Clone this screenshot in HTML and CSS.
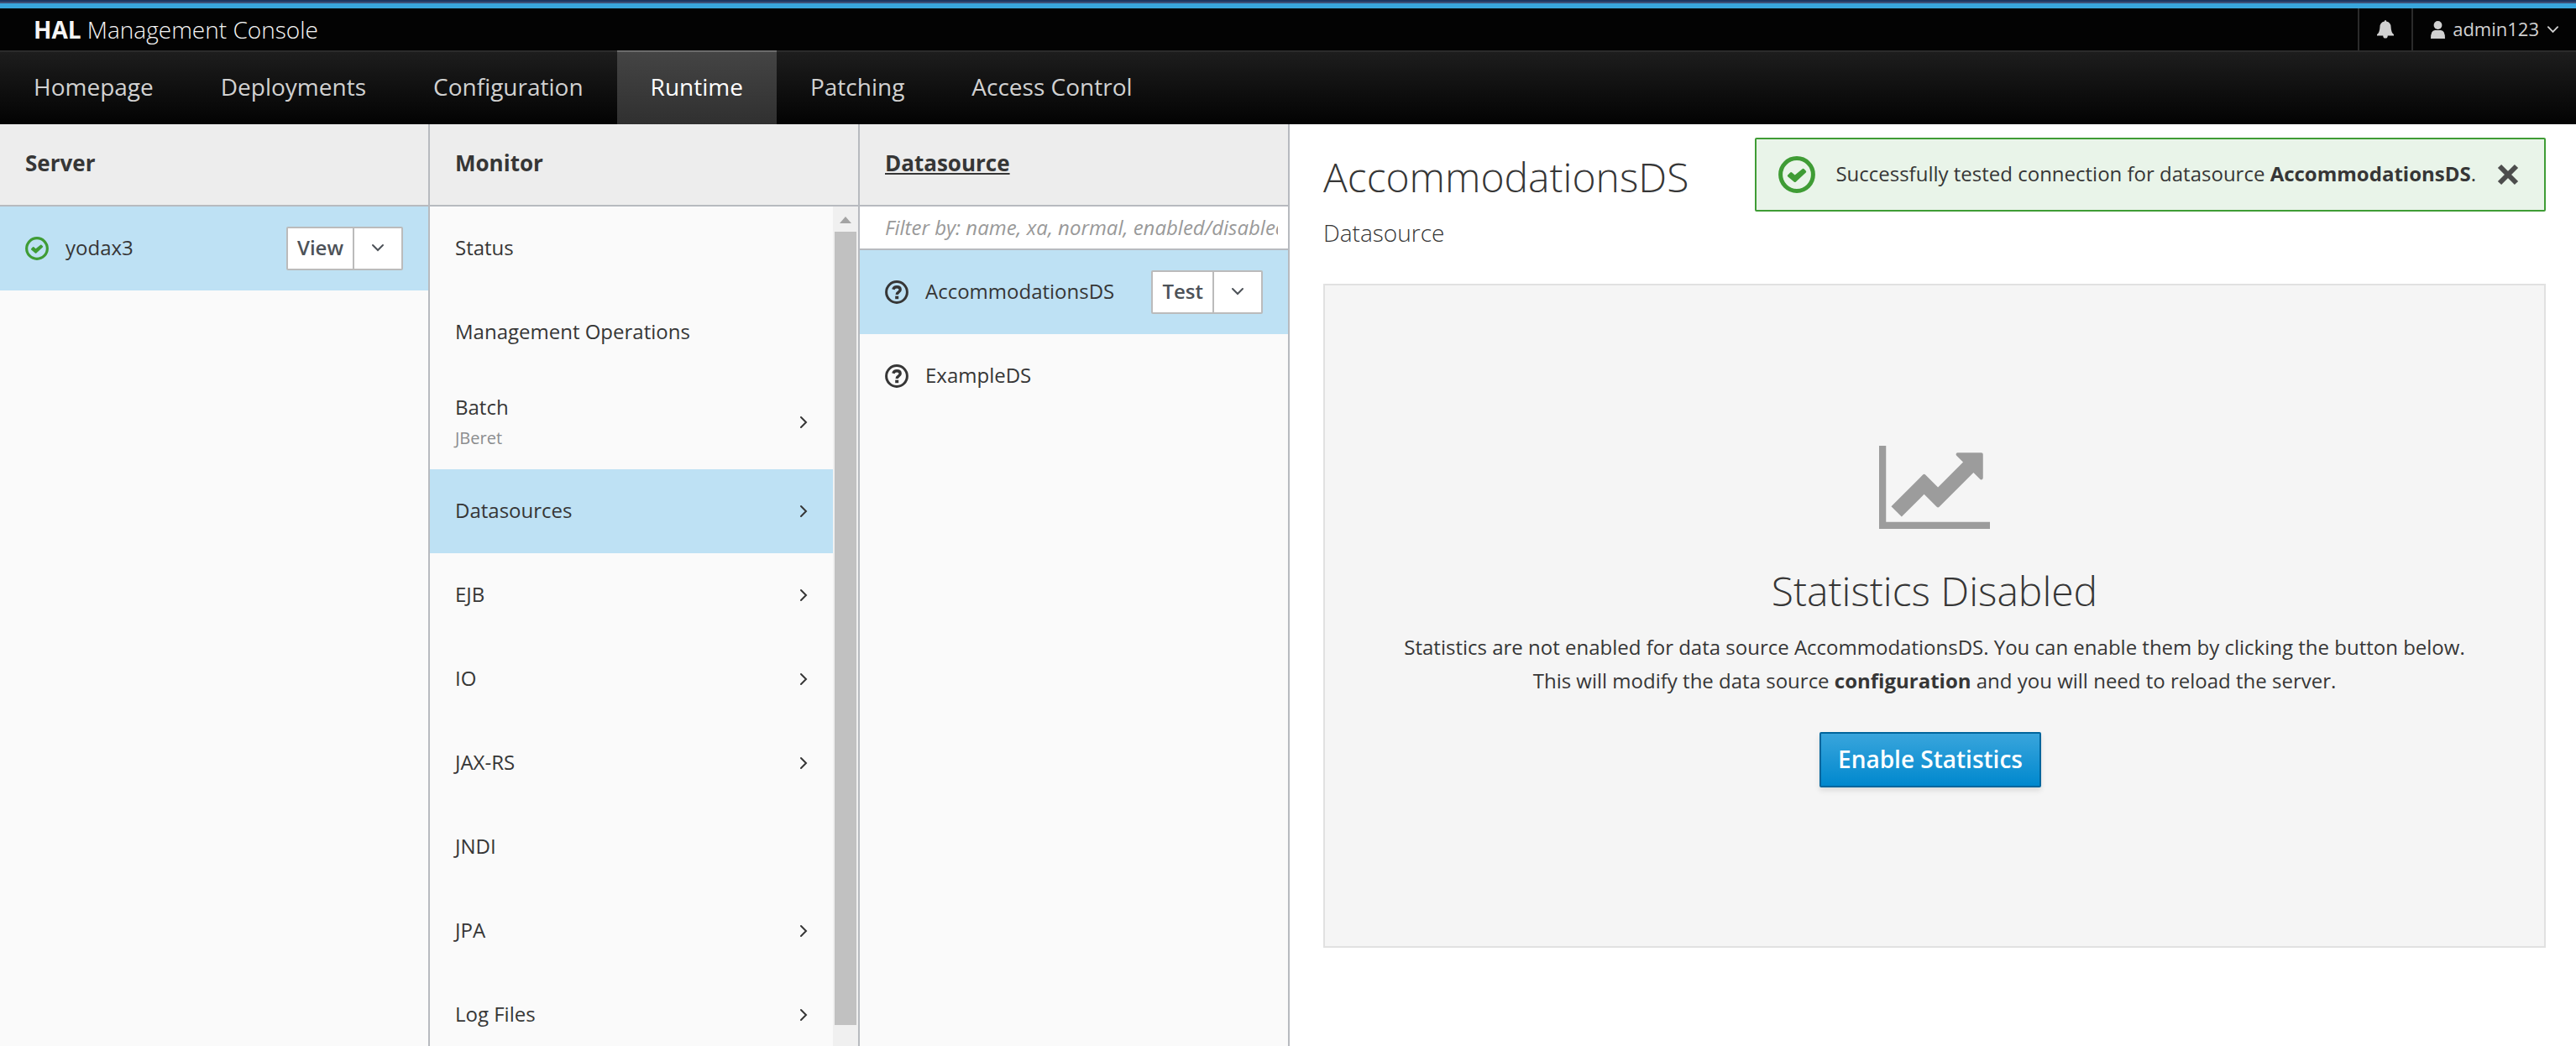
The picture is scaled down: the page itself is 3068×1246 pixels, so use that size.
FILE: index.html
```html
<!DOCTYPE html>
<html lang="en">
<head>
<meta charset="utf-8">
<title>HAL Management Console</title>
<link rel="stylesheet" href="styles.css">
</head>
<body>
<svg class="sprite" aria-hidden="true">
  <symbol id="ok" viewBox="0 0 44 44">
    <circle cx="22" cy="22" r="19.4" fill="none" stroke="currentColor" stroke-width="5"/>
    <path d="M11 22.8 L14.2 19.4 Q15.2 18.6 16.2 19.4 L19.7 22.4 L28.6 15.2 Q29.6 14.4 30.6 15.2 L33 17.8 Q33.6 18.8 32.8 19.6 L21 30.6 Q19.8 31.6 18.6 30.6 L11.4 24.4 Q10.4 23.6 11 22.8Z" fill="currentColor"/>
  </symbol>
  <symbol id="help" viewBox="0 0 28 28">
    <circle cx="14" cy="14" r="12.4" fill="none" stroke="currentColor" stroke-width="3"/>
    <path d="M9.8 10.8Q10.6 7.8 14.2 7.8Q18.2 7.8 18.2 11Q18.2 12.8 16.2 13.9Q14.2 15 14.2 17" fill="none" stroke="currentColor" stroke-width="3.4"/>
    <path d="M12.2 18.6h4v3.6h-4z" fill="currentColor"/>
  </symbol>
  <symbol id="right" viewBox="0 0 10 16">
    <path d="M2 2l6 6-6 6" fill="none" stroke="currentColor" stroke-width="2" stroke-linecap="round"/>
  </symbol>
  <symbol id="down" viewBox="0 0 16 10">
    <path d="M2 2l6 6 6-6" fill="none" stroke="currentColor" stroke-width="2" stroke-linecap="round"/>
  </symbol>
</svg>

<header class="masthead">
  <div class="topbar">
    <a class="brand" href="#"><b>HAL</b> Management Console</a>
    <div class="utility">
      <button class="utility-item bell" type="button" aria-label="Notifications">
        <svg width="20" height="22" viewBox="0 0 20 22"><path d="M10 0Q11.2 0 11.2 1.6Q16.4 2.6 16.6 8.4Q16.8 14.6 20 17V18.4H12.8Q12.6 21.6 10 21.6Q7.4 21.6 7.2 18.4H0V17Q3.2 14.6 3.4 8.4Q3.6 2.6 8.8 1.6Q8.8 0 10 0Z" fill="currentColor"/></svg>
      </button>
      <button class="utility-item user" type="button">
        <svg width="17" height="21" viewBox="0 0 17 21"><circle cx="8.5" cy="5" r="4.9" fill="currentColor"/><path d="M0 21Q0 11 5 11H12Q17 11 17 21Z" fill="currentColor"/></svg>
        <span>admin123</span>
        <svg class="caret" width="15" height="10"><use href="#down"/></svg>
      </button>
    </div>
  </div>
  <nav class="tabs">
    <a href="#">Homepage</a>
    <a href="#">Deployments</a>
    <a href="#">Configuration</a>
    <a class="active" href="#">Runtime</a>
    <a href="#">Patching</a>
    <a href="#">Access Control</a>
  </nav>
</header>

<main class="finder">
  <section class="column">
    <h2 class="column-title">Server</h2>
    <ul class="items">
      <li class="item selected">
        <svg class="status good" width="28" height="28"><use href="#ok"/></svg>
        <span class="label">yodax3</span>
        <span class="split"><button type="button">View</button><button class="toggle" type="button" aria-label="More actions"><svg width="16" height="10"><use href="#down"/></svg></button></span>
      </li>
    </ul>
  </section>

  <section class="column">
    <h2 class="column-title">Monitor</h2>
    <div class="scroll-area">
      <ul class="items">
        <li class="item"><span class="label">Status</span></li>
        <li class="item"><span class="label">Management Operations</span></li>
        <li class="item"><span class="label">Batch<small>JBeret</small></span><svg class="more" width="10" height="16"><use href="#right"/></svg></li>
        <li class="item selected"><span class="label">Datasources</span><svg class="more" width="10" height="16"><use href="#right"/></svg></li>
        <li class="item"><span class="label">EJB</span><svg class="more" width="10" height="16"><use href="#right"/></svg></li>
        <li class="item"><span class="label">IO</span><svg class="more" width="10" height="16"><use href="#right"/></svg></li>
        <li class="item"><span class="label">JAX-RS</span><svg class="more" width="10" height="16"><use href="#right"/></svg></li>
        <li class="item"><span class="label">JNDI</span></li>
        <li class="item"><span class="label">JPA</span><svg class="more" width="10" height="16"><use href="#right"/></svg></li>
        <li class="item"><span class="label">Log Files</span><svg class="more" width="10" height="16"><use href="#right"/></svg></li>
      </ul>
      <div class="scrollbar" aria-hidden="true">
        <svg width="14" height="8" viewBox="0 0 14 8"><path d="M0 8L7 0l7 8z" fill="#a3a3a3"/></svg>
        <div class="thumb"></div>
      </div>
    </div>
  </section>

  <section class="column">
    <h2 class="column-title current">Datasource</h2>
    <input class="filter" type="text" aria-label="Filter datasources" placeholder="Filter by: name, xa, normal, enabled/disabled, deployment">
    <ul class="items">
      <li class="item selected">
        <svg class="status" width="28" height="28"><use href="#help"/></svg>
        <span class="label">AccommodationsDS</span>
        <span class="split"><button type="button">Test</button><button class="toggle" type="button" aria-label="More actions"><svg width="16" height="10"><use href="#down"/></svg></button></span>
      </li>
      <li class="item">
        <svg class="status" width="28" height="28"><use href="#help"/></svg>
        <span class="label">ExampleDS</span>
      </li>
    </ul>
  </section>

  <article class="preview">
    <h1>AccommodationsDS</h1>
    <p class="kind">Datasource</p>
    <div class="toast" role="status">
      <svg class="good" width="44" height="44"><use href="#ok"/></svg>
      <span>Successfully tested connection for datasource <b>AccommodationsDS</b>.</span>
      <button class="close" type="button" aria-label="Close"><svg width="26" height="26" viewBox="0 0 26 26"><path d="M3 3l20 20M23 3L3 23" fill="none" stroke="currentColor" stroke-width="6"/></svg></button>
    </div>
    <div class="empty">
      <svg width="132" height="99" viewBox="0 128 2048 1536"><path fill="#9c9c9c" d="M2048 1536v128h-2048v-1536h128v1408h1920zM1920 288v435q0 21-19.5 29.5t-35.5-7.5l-121-121-633 633q-10 10-23 10t-23-10l-233-233-416 416-192-192 585-585q10-10 23-10t23 10l233 233 464-464-121-121q-16-16-7.5-35.5t29.5-19.5h435q14 0 23 9t9 23z"/></svg>
      <h2>Statistics Disabled</h2>
      <p>Statistics are not enabled for data source AccommodationsDS. You can enable them by clicking the button below.<br>This will modify the data source <b>configuration</b> and you will need to reload the server.</p>
      <div class="actions"><button class="primary" type="button">Enable Statistics</button></div>
    </div>
  </article>
</main>
</body>
</html>
```
FILE: styles.css
```css
* { box-sizing: border-box; }

body {
  display: flex;
  flex-direction: column;
  height: 100vh;
  margin: 0;
  overflow: hidden;
  background: #fff;
  color: #363636;
  font: 24px/40px "Open Sans", sans-serif;
}

h1, h2, p, ul { margin: 0; padding: 0; }
ul { list-style: none; }
b { font-weight: 700; }
a { color: inherit; text-decoration: none; }
button { margin: 0; padding: 0; border: 0; background: none; color: inherit; font: inherit; cursor: pointer; }
svg { display: block; flex: none; }
.sprite { position: absolute; width: 0; height: 0; }
.good { color: #3f9c35; }

/* Masthead */
.masthead {
  border-top: 2px solid #1c3560;
  background: #030303;
}
.topbar {
  display: flex;
  justify-content: space-between;
  height: 58px;
  border-top: 2px solid #3d5078;
  box-shadow: inset 0 6px #39a5dc;
  padding-top: 6px;
}
.brand {
  padding-left: 40px;
  color: #f5f5f5;
  font-size: 28px;
  font-weight: 300;
  line-height: 50px;
}
.utility { display: flex; color: #d1d1d1; font-size: 22px; line-height: 48px; }
.utility-item {
  display: flex;
  align-items: center;
  border-left: 2px solid #2b2b2b;
}
.utility-item span { padding-bottom: 2px; }
.bell { width: 64px; justify-content: center; }
.user { padding: 0 20px 0 21px; gap: 9px; }
.tabs {
  display: flex;
  height: 88px;
  border-top: 2px solid #2b2b2b;
  background: linear-gradient(#1d1d1d, #030303);
  background-clip: padding-box;
  color: #d1d1d1;
  font-size: 28px;
  line-height: 82px;
}
.tabs a { padding: 0 40px; }
.tabs .active {
  margin-top: -2px;
  border-top: 2px solid #6b6b6b;
  background: linear-gradient(#444, #303030);
  color: #fff;
}

/* Finder columns */
.finder { display: flex; flex: 1; min-height: 0; }
.column {
  display: flex;
  flex: 0 0 512px;
  flex-direction: column;
  border-right: 2px solid #b7babf;
  background: #fafafa;
}
.column-title {
  flex: none;
  height: 98px;
  padding: 0 30px 4px;
  border-bottom: 2px solid #b7babf;
  background: #ededed;
  font-size: 26px;
  line-height: 92px;
}
.current { text-decoration: underline; }
.items { flex: 1; min-width: 0; }
.item {
  display: flex;
  align-items: center;
  min-height: 100px;
  padding: 19px 30px;
}
.selected { background: #bee1f4; }
.status { margin-right: 20px; }
.label { flex: 1; padding-bottom: 2px; }
.label small { display: block; color: #8b8d8f; font-size: 20px; line-height: 33px; }
.scroll-area { display: flex; flex: 1; min-height: 0; }
.scrollbar {
  display: flex;
  flex: 0 0 30px;
  flex-direction: column;
  align-items: center;
  padding: 12px 2px 25px;
  background: #f0f0f0;
}
.thumb { flex: 1; width: 100%; margin-top: 10px; background: #c1c1c1; }
.split {
  display: flex;
  height: 52px;
  border: 2px solid #bbb;
  border-radius: 2px;
  background: #fff;
  color: #4d5258;
  font-weight: 600;
}
.split button { padding: 0 11px 2px; }
.split .toggle {
  display: flex;
  align-items: center;
  justify-content: center;
  width: 58px;
  border-left: 2px solid #bbb;
}
.filter {
  flex: none;
  width: 100%;
  height: 52px;
  padding: 0 12px 2px 30px;
  border: 0;
  border-bottom: 2px solid #b7babf;
  border-radius: 0;
  background: #fff;
  color: inherit;
  font: inherit;
}
.filter::placeholder { color: #999; font-style: italic; opacity: 1; }

/* Preview pane */
.preview { position: relative; flex: 1; min-width: 0; padding: 35px 36px 0 40px; }
.preview h1, .empty h2 { font-size: 48px; font-weight: 300; line-height: 56px; }
.kind { margin: 18px 0 41px; font-size: 28px; font-weight: 300; }
.toast {
  position: absolute;
  top: 16px;
  right: 36px;
  display: flex;
  align-items: center;
  height: 88px;
  padding: 0 30px 0 26px;
  border: 2px solid #3f9c35;
  border-radius: 2px;
  background: #e9f4e9;
}
.toast span { margin: 0 25px 0 24px; padding-bottom: 2px; }
.close { color: #4d4d4d; }
.empty {
  display: flex;
  flex-direction: column;
  align-items: center;
  padding: 191px 60px 189px;
  border: 2px solid #e1e1e1;
  background: #f5f5f5;
  text-align: center;
}
.empty h2 { margin: 46px 0 19px; }
.actions { padding: 41px 10px 0 0; }
.primary {
  height: 66px;
  padding: 0 20px 2px;
  border: 2px solid #00659c;
  border-radius: 2px;
  background: linear-gradient(#39a5dc, #0088ce);
  box-shadow: 0 4px 6px rgba(3, 3, 3, .1);
  color: #fff;
  font-size: 28px;
  font-weight: 600;
}
```
